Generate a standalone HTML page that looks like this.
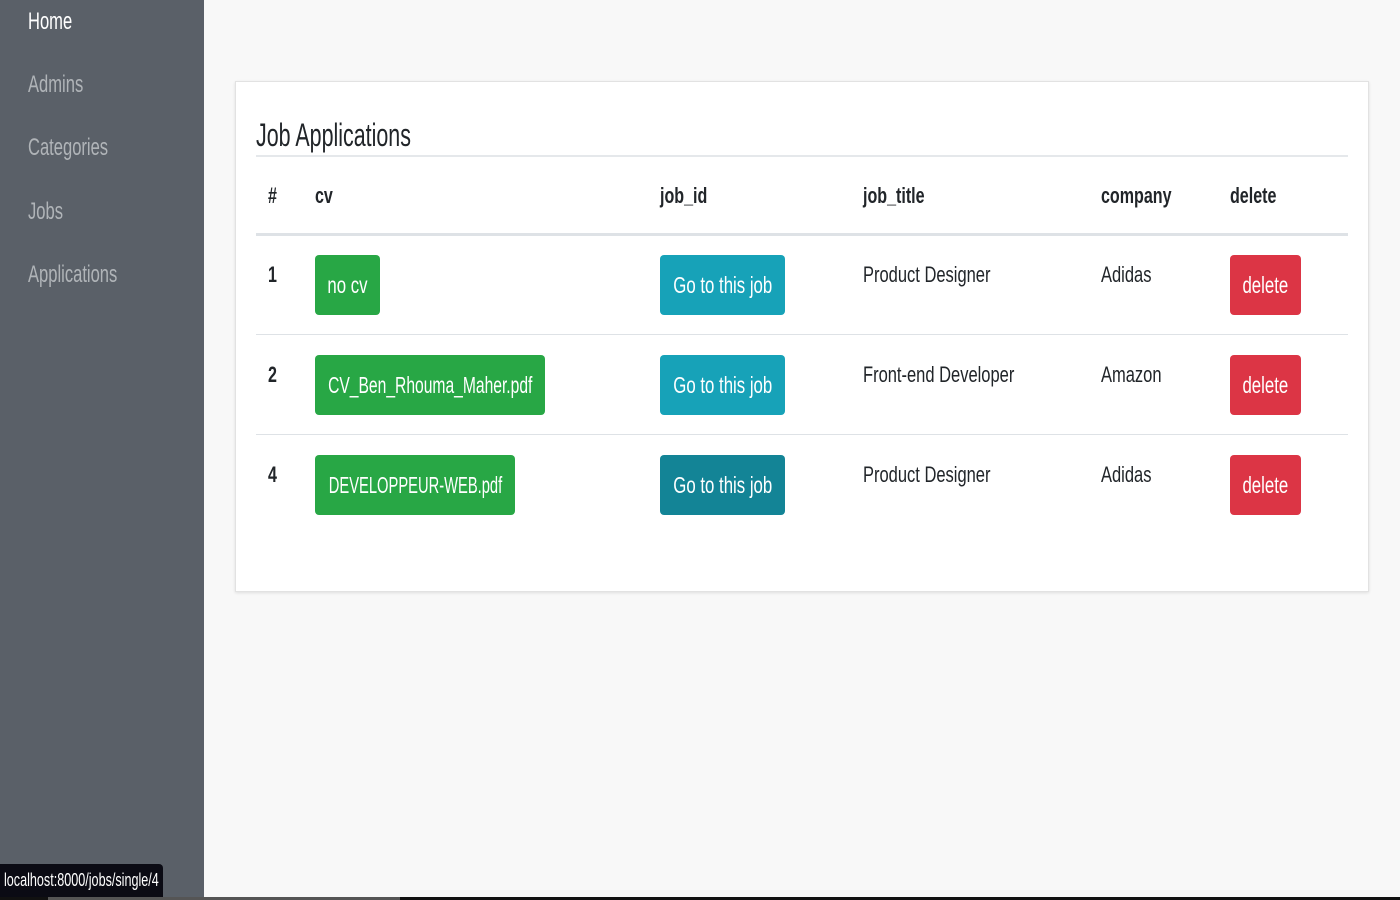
<!DOCTYPE html>
<html><head><style>
body{margin:0;width:1400px;height:900px;background:#f8f8f8;font-family:"Liberation Sans",sans-serif;position:relative;overflow:hidden}
.a{position:absolute;white-space:nowrap}
.s{display:inline-block;transform:scaleX(.75);transform-origin:left center}
#side{position:absolute;left:0;top:0;width:204px;height:900px;background:#5a6068}
.nav{position:absolute;left:28px;font-size:24px;color:#b0b4b8;line-height:30px}
.nav .s{transform:scaleX(.69)}
#card{position:absolute;left:235px;top:81px;width:1132px;height:509px;background:#fff;border:1px solid #e2e2e2;box-shadow:0 1px 3px rgba(0,0,0,.1)}
.line{position:absolute;left:256px;width:1092px;background:#dee2e6}
.h{font-size:22px;font-weight:bold;color:#212529;line-height:30px}
.h .s{transform:scaleX(.73)}
.d{font-size:22px;color:#212529;line-height:30px}
.b{position:absolute;height:60px;border-radius:4px;color:#fff;font-size:23px;display:flex;align-items:center;justify-content:center}
.b span{display:inline-block;transform:scaleX(.73);white-space:nowrap;flex-shrink:0}
.g{background:#28a745}.c{background:#17a2b8}.c2{background:#138496}.r{background:#dc3545}
</style></head><body>
<div id="side"></div>
<div class="nav" style="top:7px;color:#fff"><span class="s">Home</span></div>
<div class="nav" style="top:70px"><span class="s">Admins</span></div>
<div class="nav" style="top:133px"><span class="s">Categories</span></div>
<div class="nav" style="top:197px"><span class="s">Jobs</span></div>
<div class="nav" style="top:260px"><span class="s">Applications</span></div>
<div id="card"></div>
<div class="a" style="left:256px;top:115px;font-size:32px;color:#212529;line-height:40px"><span class="s" style="transform:scaleX(.67)">Job Applications</span></div>
<div class="line" style="top:155px;height:2px;background:#e5e8eb"></div>
<div class="a h" style="left:268px;top:181px"><span class="s">#</span></div>
<div class="a h" style="left:315px;top:181px"><span class="s">cv</span></div>
<div class="a h" style="left:660px;top:181px"><span class="s">job_id</span></div>
<div class="a h" style="left:863px;top:181px"><span class="s">job_title</span></div>
<div class="a h" style="left:1101px;top:181px"><span class="s">company</span></div>
<div class="a h" style="left:1230px;top:181px"><span class="s">delete</span></div>
<div class="line" style="top:233px;height:3px"></div>
<div class="line" style="top:334px;height:1px"></div>
<div class="line" style="top:434px;height:1px"></div>

<div class="a h" style="left:268px;top:260px"><span class="s">1</span></div>
<div class="b g" style="left:315px;top:255px;width:65px"><span>no cv</span></div>
<div class="b c" style="left:660px;top:255px;width:125px"><span>Go to this job</span></div>
<div class="a d" style="left:863px;top:260px"><span class="s">Product Designer</span></div>
<div class="a d" style="left:1101px;top:260px"><span class="s">Adidas</span></div>
<div class="b r" style="left:1230px;top:255px;width:71px"><span>delete</span></div>

<div class="a h" style="left:268px;top:360px"><span class="s">2</span></div>
<div class="b g" style="left:315px;top:355px;width:230px"><span style="transform:scaleX(.68)">CV_Ben_Rhouma_Maher.pdf</span></div>
<div class="b c" style="left:660px;top:355px;width:125px"><span>Go to this job</span></div>
<div class="a d" style="left:863px;top:360px"><span class="s">Front-end Developer</span></div>
<div class="a d" style="left:1101px;top:360px"><span class="s">Amazon</span></div>
<div class="b r" style="left:1230px;top:355px;width:71px"><span>delete</span></div>

<div class="a h" style="left:268px;top:460px"><span class="s">4</span></div>
<div class="b g" style="left:315px;top:455px;width:200px"><span style="transform:scaleX(.64)">DEVELOPPEUR-WEB.pdf</span></div>
<div class="b c2" style="left:660px;top:455px;width:125px"><span>Go to this job</span></div>
<div class="a d" style="left:863px;top:460px"><span class="s">Product Designer</span></div>
<div class="a d" style="left:1101px;top:460px"><span class="s">Adidas</span></div>
<div class="b r" style="left:1230px;top:455px;width:71px"><span>delete</span></div>

<div class="a" style="left:0;top:864px;width:163px;height:33px;background:#0b0b14;border-radius:0 4px 0 0;color:#fff;font-size:18px;line-height:33px;padding-left:4px;box-sizing:border-box"><span class="s" style="transform:scaleX(.7)">localhost:8000/jobs/single/4</span></div>
<div class="a" style="left:0;top:897px;width:1400px;height:3px;background:#111"></div>
<div class="a" style="left:48px;top:897px;width:352px;height:3px;background:#555"></div>
</body></html>
